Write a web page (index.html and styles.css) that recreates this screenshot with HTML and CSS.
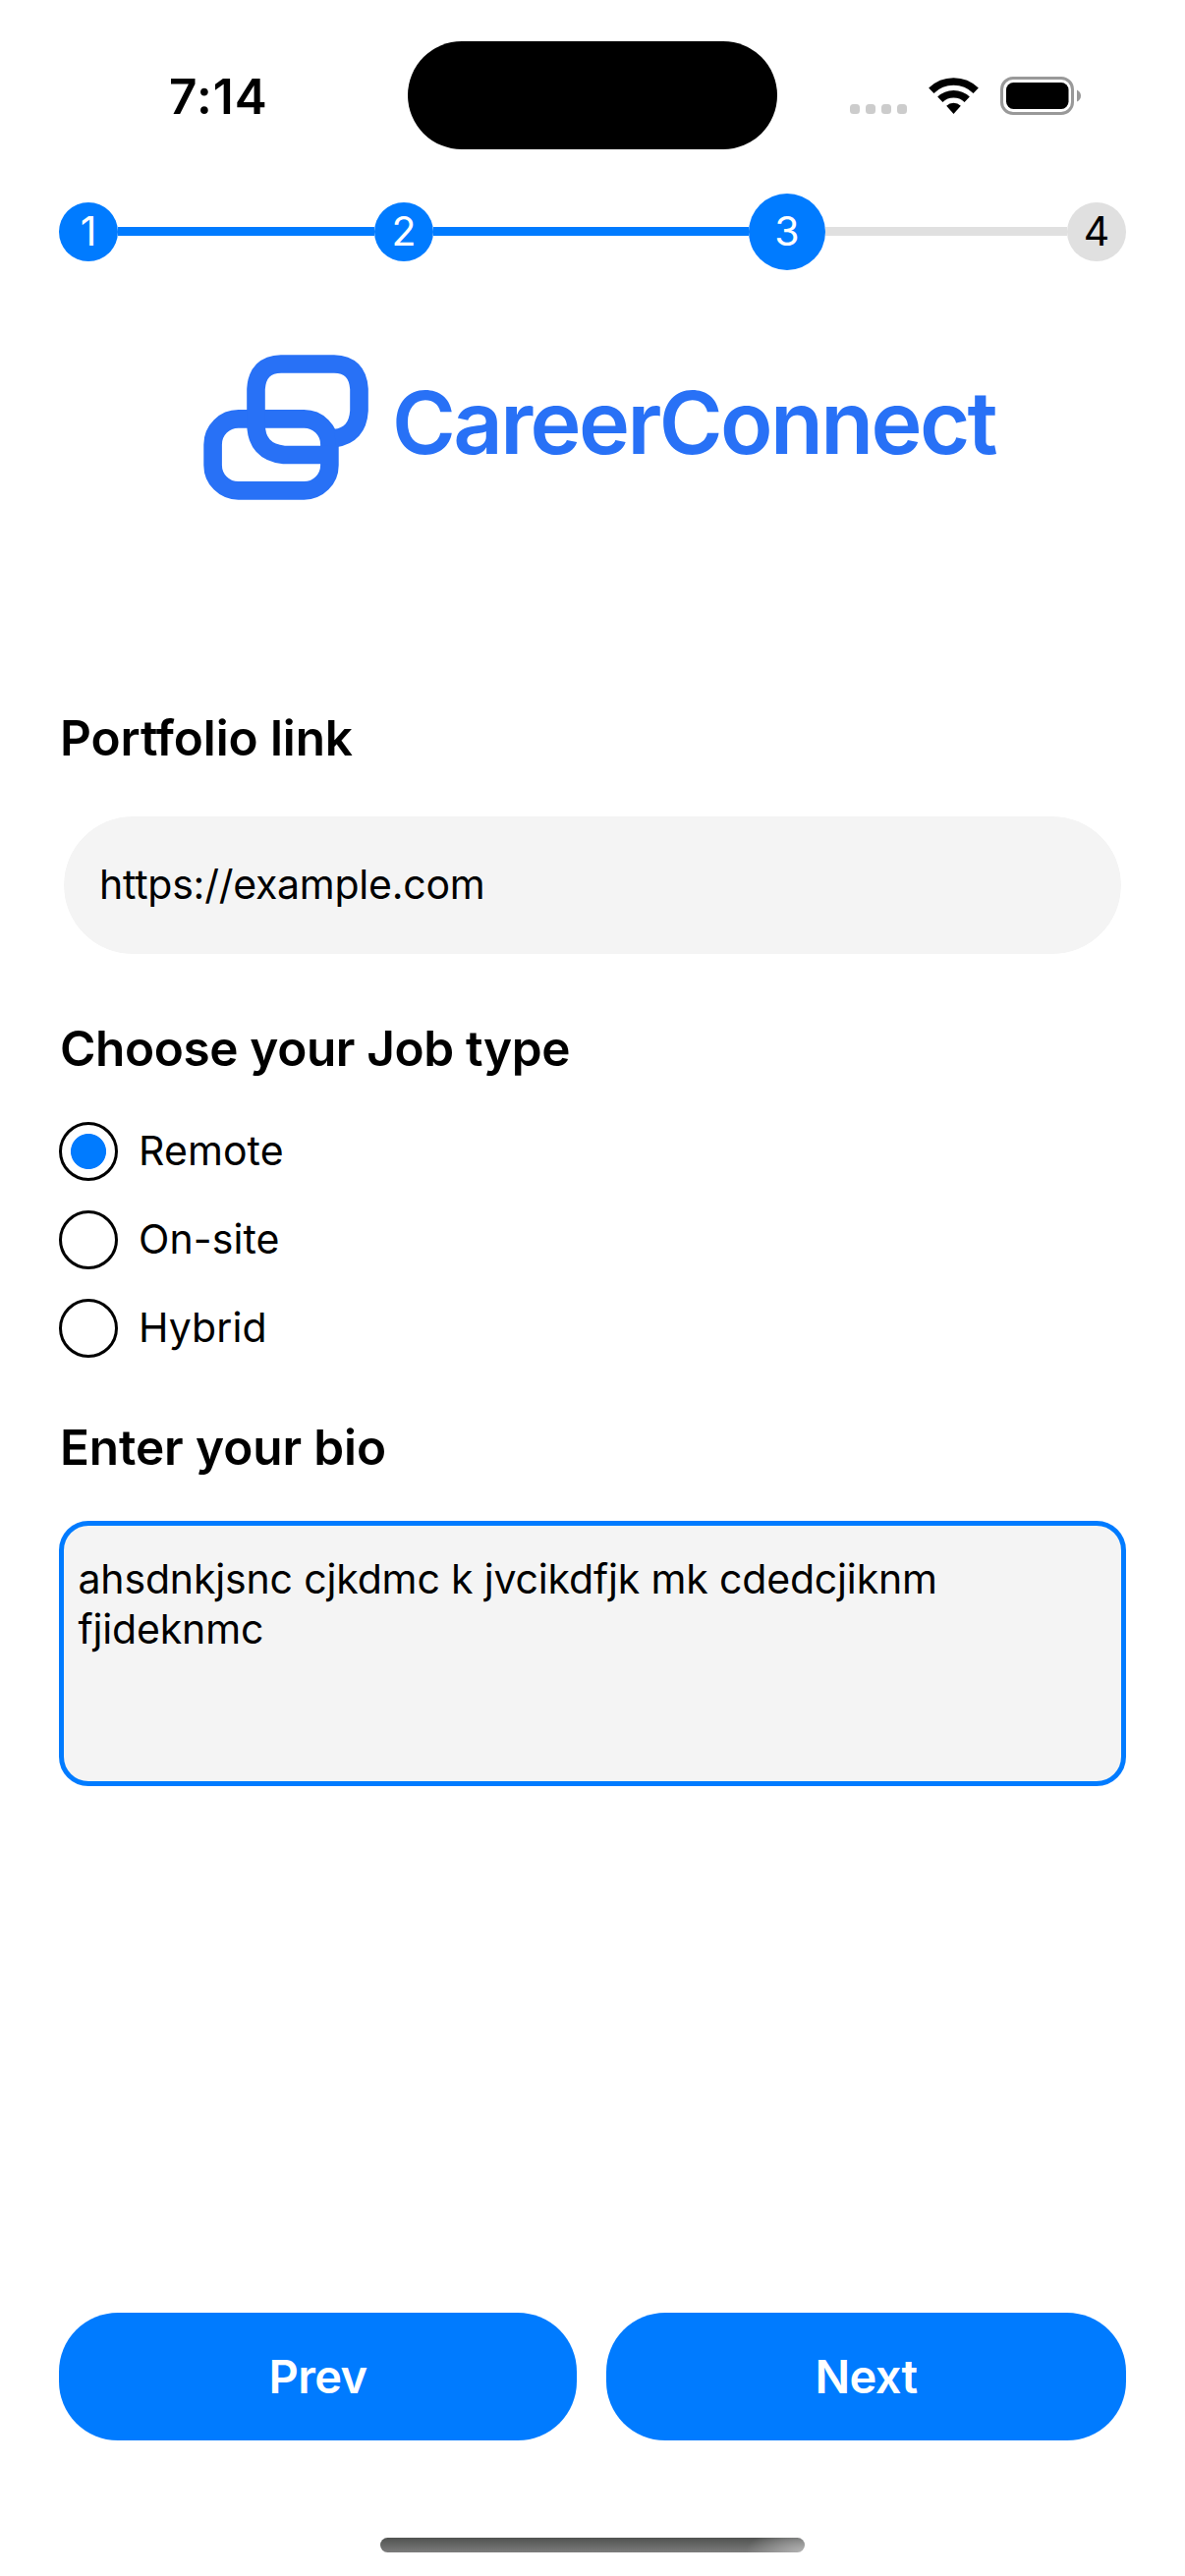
FILE: index.html
```html
<!DOCTYPE html>
<html lang="en">
<head>
<meta charset="utf-8">
<title>CareerConnect</title>
<link rel="stylesheet" href="styles.css">
</head>
<body>
<main class="screen">
  <header class="status">
    <span class="time">7:14</span>
    <span class="island"></span>
    <svg class="indicators" width="240" height="42" viewBox="0 0 240 42">
      <g fill="#ccc"><rect x="5" y="29" width="10" height="10" rx="3.5"/><rect x="21" y="29" width="10" height="10" rx="3.5"/><rect x="37" y="29" width="10" height="10" rx="3.5"/><rect x="53" y="29" width="10" height="10" rx="3.5"/></g>
      <g fill="none" stroke="#000" stroke-width="7.6"><path d="M87.8 15.2A32.5 32.5 0 0 1 133.2 15.2"/><path d="M96.8 24.2A19.8 19.8 0 0 1 124.2 24.2"/></g>
      <path d="M103.2 30.8A10.5 10.5 0 0 1 117.8 30.8L110.5 39Z"/>
      <rect x="159.5" y="2.5" width="72" height="36" rx="11.5" fill="none" stroke="#999" stroke-width="3"/>
      <rect x="164" y="7" width="63.5" height="27" rx="7.5"/>
      <path d="M236 14.5Q240 16.500 240 20.500Q240 24.500 236 26.500Z" fill="#999"/>
    </svg>
  </header>

  <nav class="steps">
    <span class="step">1</span><i class="bar bar-a"></i>
    <span class="step">2</span><i class="bar bar-b"></i>
    <span class="step current">3</span><i class="bar bar-c"></i>
    <span class="step todo">4</span>
  </nav>

  <div class="brand">
    <svg width="170" height="150" viewBox="206 360 170 150" fill="none" stroke="#2871f6" stroke-width="18.600">
      <rect x="216.600" y="426.400" width="118.800" height="73" rx="26"/>
      <path d="M334 463H289Q260.500 460 260.500 431V396Q262 371 286 370.500H340Q364 371 365.500 396V418Q364 443 341 446"/>
    </svg>
    <span class="wordmark">CareerConnect</span>
  </div>

  <form class="form">
    <label class="title">Portfolio link</label>
    <div class="field">https://example.com</div>
    <div class="title title-long">Choose your Job type</div>
    <div class="options">
      <div class="option"><span class="radio on"></span>Remote</div>
      <div class="option"><span class="radio"></span>On-site</div>
      <div class="option"><span class="radio"></span>Hybrid</div>
    </div>
    <div class="title">Enter your bio</div>
    <div class="bio">ahsdnkjsnc cjkdmc k jvcikdfjk mk cdedcjiknm<br>fjideknmc</div>
  </form>

  <footer class="actions">
    <div class="button">Prev</div>
    <div class="button">Next</div>
  </footer>
  <div class="home"></div>
</main>
</body>
</html>
```
FILE: styles.css
```css
* { box-sizing: border-box; }
body { margin: 0; background: #fff; color: #000; font-family: Inter, "Liberation Sans", sans-serif; font-size: 41px; }
.screen { display: flex; flex-direction: column; width: 1206px; height: 2622px; overflow: hidden; }
.status { display: grid; grid-template-columns: 415px 376px 1fr; height: 197px; padding-top: 42px; align-items: start; }
.time { padding-left: 172px; font-size: 49.5px; font-weight: 600; line-height: 60px; letter-spacing: 1.1px; margin-top: 26px; white-space: nowrap; }
.island { height: 110px; border-radius: 55px; background: #000; }
.indicators { margin: 35px 0 0 69px; }

.steps { display: flex; align-items: center; height: 78px; padding: 0 60px; }
.step { flex: none; width: 60px; height: 60px; border-radius: 50%; background: #007bff; color: #fff; text-align: center; line-height: 59px; }
.current { width: 78px; height: 78px; line-height: 77px; }
.todo { background: #e0e0e0; color: #000; }
.bar { height: 9px; margin-bottom: 1px; background: #007bff; }
.bar-a { flex: 261; }
.bar-b { flex: 321; }
.bar-c { flex: 246; background: #e0e0e0; }

.brand { display: flex; margin: 85px 0 0 206px; height: 150px; }
.wordmark { margin-left: 23px; padding-top: 20px; font-size: 88px; line-height: 100px; font-weight: 600; letter-spacing: -2.6px; color: #2871f6; white-space: nowrap; }

.form { padding: 211px 60px 0; }
.title { display: block; height: 60px; margin-bottom: 45px; padding-left: 1px; font-size: 49.5px; line-height: 60px; font-weight: 600; letter-spacing: -0.1px; }
.title-long { letter-spacing: -0.38px; }
.field { height: 150px; margin-bottom: 61px; padding: 0 36px; border: 5px solid #fff; border-radius: 75px; background: #f4f4f4; background-clip: padding-box; line-height: 138px; letter-spacing: -0.25px; }
.options { display: flex; flex-direction: column; gap: 30px; margin-bottom: 61px; }
.option { display: flex; gap: 21px; height: 60px; line-height: 58px; letter-spacing: 0.1px; }
.radio { width: 60px; height: 60px; border: 3px solid #000; border-radius: 50%; }
.on { background: radial-gradient(circle closest-side at center, #007bff 17.6px, transparent 18.4px) border-box; }
.bio { height: 270px; padding: 29px 14.5px; border: 5px solid #007bff; border-radius: 30px; background: #f4f4f4; line-height: 51px; letter-spacing: -0.16px; }

.actions { display: grid; grid-template-columns: 527px 529px; gap: 30px; margin: auto 60px 0; }
.button { height: 130px; border-radius: 60px; background: #007bff; color: #fff; text-align: center; font-size: 47px; font-weight: 600; line-height: 130px; letter-spacing: -0.6px; }
.home { flex: none; width: 432px; height: 15px; margin: 99px auto 24px; border-radius: 7.5px; background: radial-gradient(ellipse 60px 26px at 100% 100%, #b4b4b4, transparent), linear-gradient(#505250, #7c7c7c); }
```
